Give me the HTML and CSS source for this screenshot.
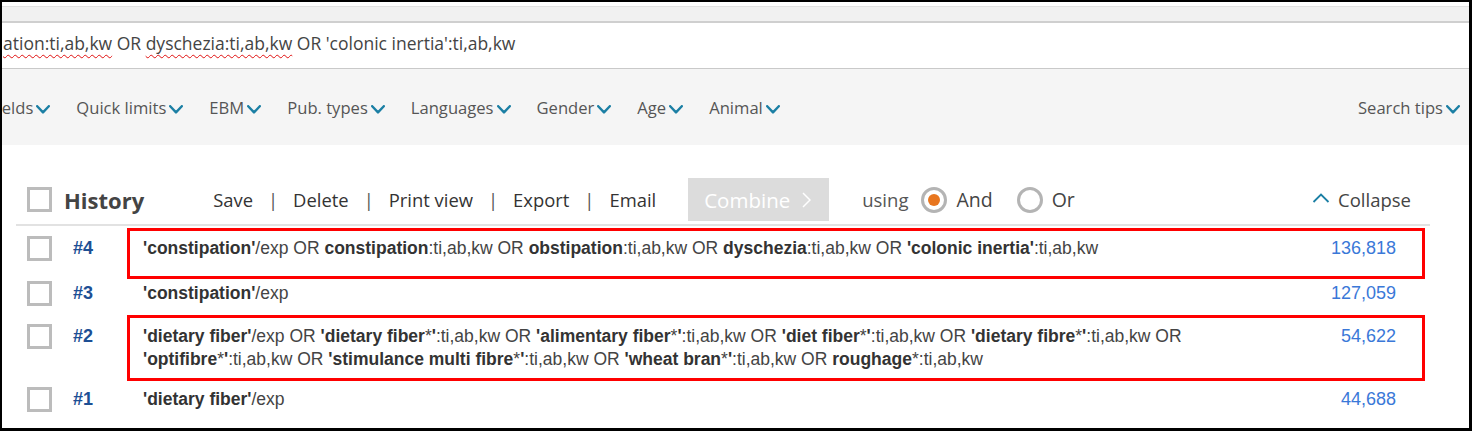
FILE: index.html
```html
<!DOCTYPE html>
<html lang="en">
<head>
<meta charset="utf-8">
<title>History</title>
<link rel="stylesheet" href="styles.css">
</head>
<body>
<div class="topbar"></div>
<div class="search"><span class="typo">ation:ti,ab,kw</span> OR <span class="typo">dyschezia:ti,ab,kw</span> OR 'colonic inertia':ti,ab,kw</div>
<nav class="filters">
  <div class="filter-list">
    <span class="filter first">Fields<svg class="chev" viewBox="0 0 14 9" width="14" height="9"><polyline points="1.2,1.2 7,7.4 12.8,1.2"/></svg></span>
    <span class="filter">Quick limits<svg class="chev" viewBox="0 0 14 9" width="14" height="9"><polyline points="1.2,1.2 7,7.4 12.8,1.2"/></svg></span>
    <span class="filter">EBM<svg class="chev" viewBox="0 0 14 9" width="14" height="9"><polyline points="1.2,1.2 7,7.4 12.8,1.2"/></svg></span>
    <span class="filter">Pub. types<svg class="chev" viewBox="0 0 14 9" width="14" height="9"><polyline points="1.2,1.2 7,7.4 12.8,1.2"/></svg></span>
    <span class="filter">Languages<svg class="chev" viewBox="0 0 14 9" width="14" height="9"><polyline points="1.2,1.2 7,7.4 12.8,1.2"/></svg></span>
    <span class="filter">Gender<svg class="chev" viewBox="0 0 14 9" width="14" height="9"><polyline points="1.2,1.2 7,7.4 12.8,1.2"/></svg></span>
    <span class="filter">Age<svg class="chev" viewBox="0 0 14 9" width="14" height="9"><polyline points="1.2,1.2 7,7.4 12.8,1.2"/></svg></span>
    <span class="filter">Animal<svg class="chev" viewBox="0 0 14 9" width="14" height="9"><polyline points="1.2,1.2 7,7.4 12.8,1.2"/></svg></span>
  </div>
  <span class="filter">Search tips<svg class="chev" viewBox="0 0 14 9" width="14" height="9"><polyline points="1.2,1.2 7,7.4 12.8,1.2"/></svg></span>
</nav>
<section class="history">
  <div class="hist-head">
    <span class="cb"></span>
    <h2 class="hist-title">History</h2>
    <div class="actions">
      <span>Save</span><span class="sep">|</span><span>Delete</span><span class="sep">|</span><span>Print view</span><span class="sep">|</span><span>Export</span><span class="sep">|</span><span>Email</span>
    </div>
    <span class="combine">Combine<svg class="combine-chev" viewBox="0 0 9 16" width="9" height="16"><polyline points="1,1 8,8 1,15"/></svg></span>
    <span class="using">using</span>
    <span class="radio on"></span><span class="radio-label">And</span>
    <span class="radio"></span><span class="radio-label">Or</span>
    <span class="collapse"><svg class="caret" viewBox="0 0 18 10" width="18" height="10"><polyline points="1.5,9 9,1.5 16.5,9"/></svg>Collapse</span>
  </div>
  <div class="rows">
    <div class="row">
      <span class="cb"></span>
      <span class="rid">#4</span>
      <div class="cell mark mark-a">
        <div class="query"><b>'constipation'</b>/exp OR <b>constipation</b>:ti,ab,kw OR <b>obstipation</b>:ti,ab,kw OR <b>dyschezia</b>:ti,ab,kw OR <b>'colonic inertia'</b>:ti,ab,kw</div>
        <div class="count">136,818</div>
      </div>
    </div>
    <div class="row">
      <span class="cb"></span>
      <span class="rid">#3</span>
      <div class="cell">
        <div class="query"><b>'constipation'</b>/exp</div>
        <div class="count">127,059</div>
      </div>
    </div>
    <div class="row">
      <span class="cb"></span>
      <span class="rid">#2</span>
      <div class="cell mark mark-b">
        <div class="query"><b>'dietary fiber'</b>/exp OR <b>'dietary fiber</b>*<b>'</b>:ti,ab,kw OR <b>'alimentary fiber</b>*<b>'</b>:ti,ab,kw OR <b>'diet fiber</b>*<b>'</b>:ti,ab,kw OR <b>'dietary fibre</b>*<b>'</b>:ti,ab,kw OR <b>'optifibre</b>*<b>'</b>:ti,ab,kw OR <b>'stimulance multi fibre</b>*<b>'</b>:ti,ab,kw OR <b>'wheat bran</b>*<b>'</b>:ti,ab,kw OR <b>roughage</b>*:ti,ab,kw</div>
        <div class="count">54,622</div>
      </div>
    </div>
    <div class="row">
      <span class="cb"></span>
      <span class="rid">#1</span>
      <div class="cell">
        <div class="query"><b>'dietary fiber'</b>/exp</div>
        <div class="count">44,688</div>
      </div>
    </div>
  </div>
</section>
</body>
</html>
```
FILE: styles.css
```css
html, body {
  margin: 0;
  padding: 0;
}
body {
  width: 1472px;
  height: 431px;
  box-sizing: border-box;
  border-style: solid;
  border-color: #000;
  border-width: 2px 3px 3px 2px;
  overflow: hidden;
  background: #fff;
  font-family: "Open Sans", "Liberation Sans", sans-serif;
  color: #333;
}

.topbar {
  margin-top: 4px;
  height: 14px;
  background: #f1f1f1;
  border-top: 1px solid #e2e2e2;
  border-bottom: 2px solid #cfcfcf;
}

.search {
  height: 45px;
  line-height: 40px;
  font-size: 17.5px;
  color: #444;
  white-space: nowrap;
  overflow: hidden;
  border-bottom: 1px solid #c9c9c9;
  padding-left: 1px;
}
.typo {
  text-decoration: underline wavy #e01010;
  text-decoration-thickness: 1px;
  text-underline-offset: 4px;
}

.filters {
  height: 76px;
  box-sizing: border-box;
  background: #f5f5f5;
  padding: 28px 9px 0 0;
  display: flex;
  justify-content: space-between;
  align-items: flex-start;
  overflow: hidden;
}
.filter-list {
  display: flex;
  gap: 26px;
}
.filter {
  display: flex;
  align-items: center;
  font-size: 16.6px;
  line-height: 22px;
  color: #555;
  white-space: nowrap;
}
.filter.first {
  margin-left: -13px;
}
.chev {
  margin-left: 3px;
  margin-top: 3px;
  fill: none;
  stroke: #1b7fa4;
  stroke-width: 2.4;
  stroke-linecap: round;
  stroke-linejoin: round;
}

.history {
  margin-left: 14px;
  width: 1414px;
}
.hist-head {
  margin-top: 33px;
  height: 43px;
  padding-right: 19px;
  padding-bottom: 3px;
  border-bottom: 2px solid #e2e2e2;
  display: flex;
  align-items: center;
}
.cb {
  flex: 0 0 auto;
  width: 25px;
  height: 25px;
  box-sizing: border-box;
  border: 3px solid #bcbcbc;
  background: #fff;
  margin-left: 11px;
}
.hist-title {
  margin: 0 0 0 12px;
  font-size: 22px;
  font-weight: 700;
  color: #444;
  line-height: 30px;
}
.actions {
  margin-left: 69px;
  display: flex;
  font-size: 18.4px;
  color: #333;
  white-space: nowrap;
}
.sep {
  margin: 0 15px;
  color: #555;
}
.combine {
  margin-left: 32px;
  width: 141px;
  height: 43px;
  box-sizing: border-box;
  padding-left: 16px;
  background: #dcdcdc;
  color: #fff;
  font-size: 20.5px;
  display: flex;
  align-items: center;
}
.combine-chev {
  margin-left: 12px;
  fill: none;
  stroke: #fff;
  stroke-width: 1.5;
}
.using {
  margin-left: 33px;
  font-size: 18.5px;
  color: #555;
}
.radio {
  width: 26px;
  height: 26px;
  box-sizing: border-box;
  border: 3px solid #b4b4b4;
  border-radius: 50%;
  margin-left: 13px;
  display: flex;
  align-items: center;
  justify-content: center;
}
.radio + .radio-label + .radio {
  margin-left: 24px;
}
.radio.on::after {
  content: "";
  width: 12px;
  height: 12px;
  border-radius: 50%;
  background: #e8761f;
}
.radio-label {
  margin-left: 9px;
  font-size: 19.5px;
  color: #444;
}
.collapse {
  margin-left: auto;
  display: flex;
  align-items: center;
  font-size: 18.5px;
  color: #444;
}
.caret {
  margin-right: 8px;
  margin-top: -4px;
  fill: none;
  stroke: #1b7fa4;
  stroke-width: 1.8;
}

.rows {
  margin-top: 3px;
}
.row {
  display: flex;
  align-items: flex-start;
}
.row .cb {
  margin-top: 7px;
}
.rid {
  flex: 0 0 54px;
  margin-left: 21px;
  margin-top: 8px;
  line-height: 23px;
  font-family: "Liberation Sans", Arial, sans-serif;
  font-weight: 700;
  font-size: 18px;
  color: #1d4f94;
}
.cell {
  position: relative;
  flex: 0 0 1298px;
  box-sizing: border-box;
  padding: 8px 29px 12px 16px;
  display: flex;
  align-items: flex-start;
  font-family: "Liberation Sans", Arial, sans-serif;
}
.query {
  flex: 0 0 1100px;
  font-size: 17.5px;
  line-height: 23px;
  color: #444;
}
.query b {
  color: #333;
}
.count {
  flex: 1;
  text-align: right;
  font-size: 18px;
  line-height: 23px;
  color: #3a78d8;
}
.mark::after {
  content: "";
  position: absolute;
  left: 0;
  right: 0;
  border: 3px solid #ff0000;
  pointer-events: none;
}
.mark-a {
  padding-bottom: 14px;
}
.mark-a::after {
  top: -1px;
  bottom: -5px;
}
.mark-b {
  padding-bottom: 9px;
}
.mark-b::after {
  top: -2px;
  bottom: -1px;
}
```
